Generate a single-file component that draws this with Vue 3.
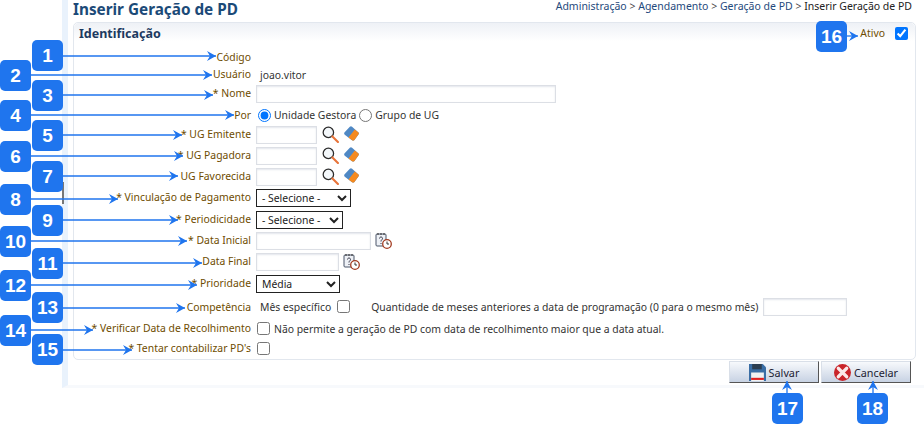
<script setup>
const rowsUg = ['UG Emitente', 'UG Pagadora', 'UG Favorecida']
const badges = [
  [1, 32, 40], [2, 0, 60], [3, 32, 80], [4, 0, 100], [5, 32, 120], [6, 0, 141],
  [7, 32, 161], [8, 0, 184], [9, 32, 205], [10, 0, 226], [11, 32, 248], [12, 0, 270],
  [13, 32, 292], [14, 0, 315], [15, 32, 334], [16, 816, 21], [17, 772, 393], [18, 857, 393]
]
const arrows = [
  [63, 56, 216, 56], [31, 75, 212, 75], [63, 95, 213, 95], [31, 115, 234, 115],
  [63, 135, 182, 135], [31, 156, 183, 156], [63, 176, 178, 176], [31, 199, 118, 199],
  [63, 220, 178, 220], [31, 241, 187, 241], [63, 263, 202, 263], [31, 285, 197, 285],
  [63, 308, 185, 308], [31, 330, 93, 330], [63, 350, 132, 350], [847, 36, 858, 36],
  [787, 393, 787, 381], [873, 393, 873, 381]
]
function head(a) {
  const [x1, y1, x2, y2] = a
  if (x1 === x2) return `${x2},${y2} ${x2 - 5},${y2 + 9} ${x2},${y2 + 6} ${x2 + 5},${y2 + 9}`
  return `${x2},${y2} ${x2 - 9},${y2 - 5} ${x2 - 6},${y2} ${x2 - 9},${y2 + 5}`
}
</script>

<template>
  <div class="page">
    <svg class="defs" width="0" height="0">
      <symbol id="i-search" viewBox="0 0 16 16">
        <circle cx="6" cy="6" r="4.900" fill="#f4f8fb" stroke="#2b2b2b" stroke-width="1.200" />
        <path d="M9.800 9.800 15 15" stroke="#e8743a" stroke-width="2" stroke-linecap="round" />
      </symbol>
      <symbol id="i-erase" viewBox="0 0 16 16">
        <path d="M6.200 .8a1.800 1.800 0 0 1 2.400 0l6.600 5.800a1.800 1.800 0 0 1 .2 2.400l-4.300 5.800a1.800 1.800 0 0 1-2.500.3L.8 9.200a1.800 1.800 0 0 1-.1-2.500Z" fill="#4f88c4" />
        <path d="M11.500 3.600l3.700 3a1.800 1.800 0 0 1 .2 2.400l-4.300 5.800a1.800 1.800 0 0 1-2.500.3L4.800 12.200Z" fill="#f58a1f" />
      </symbol>
      <symbol id="i-cal" viewBox="0 0 17 17">
        <rect x="1" y="2" width="10" height="12" rx="1" fill="#eef1f6" stroke="#4a5568" />
        <path d="M3 1v2M6 1v2M9 1v2" stroke="#333" />
        <path d="M4.500 6.500c0-2 3-2 3 0 0 1.300-1.500 1.300-1.500 3M6 11v1" fill="none" stroke="#334" />
        <circle cx="12" cy="12" r="4.300" fill="#fff" stroke="#a33b20" stroke-width="1.300" />
        <path d="M12 9.500V12h2" fill="none" stroke="#333" />
      </symbol>
      <symbol id="i-save" viewBox="0 0 16 16">
        <path d="M0 0h13l3 3v13H0Z" fill="#3a6ea5" />
        <rect x="3" y="0" width="9" height="5" fill="#2c3e50" />
        <rect x="2" y="8" width="12" height="8" fill="#f2f2f2" />
        <rect x="2" y="13" width="12" height="2" fill="#e02020" />
      </symbol>
      <symbol id="i-cancel" viewBox="0 0 16 16">
        <circle cx="8" cy="8" r="8" fill="#c9242a" />
        <path d="M4 4l8 8M12 4l-8 8" stroke="#fbe9e9" stroke-width="3" stroke-linecap="round" />
      </symbol>
    </svg>

    <div class="sidebar"></div>
    <main class="content">
      <header class="top">
        <h1>Inserir Geração de PD</h1>
        <nav class="crumbs">
          <a>Administração</a> &gt; <a>Agendamento</a> &gt; <a>Geração de PD</a> &gt; <span>Inserir Geração de PD</span>
        </nav>
      </header>

      <section class="panel">
        <div class="panel-head">
          <h2>Identificação</h2>
          <div class="active">
            <span class="lbl-active">Ativo</span>
            <input type="checkbox" checked />
          </div>
        </div>

        <div class="form">
          <div class="row h17"><label>Código</label></div>
          <div class="row h19"><label>Usuário</label><span class="value user">joao.vitor</span></div>
          <div class="row h21"><label>* Nome</label><input class="text w300" type="text" /></div>
          <div class="row h20 nudge">
            <label>Por</label>
            <span class="choices">
              <input type="radio" name="por" checked /><span>Unidade Gestora</span>
              <input type="radio" name="por" /><span>Grupo de UG</span>
            </span>
          </div>
          <div v-for="(u, i) in rowsUg" :key="u" class="row h21">
            <label>{{ i < 2 ? '* ' : '' }}{{ u }}</label>
            <input class="text w61" type="text" />
            <svg class="ico first" width="17" height="17"><use href="#i-search" /></svg>
            <svg class="ico" width="15" height="15"><use href="#i-erase" /></svg>
          </div>
          <div class="row h22">
            <label>* Vinculação de Pagamento</label>
            <select class="sel w95"><option>- Selecione -</option></select>
          </div>
          <div class="row h21">
            <label>* Periodicidade</label>
            <select class="sel w87"><option>- Selecione -</option></select>
          </div>
          <div class="row h21">
            <label>* Data Inicial</label>
            <input class="text w115" type="text" />
            <svg class="ico cal" width="17" height="17"><use href="#i-cal" /></svg>
          </div>
          <div class="row h22">
            <label>Data Final</label>
            <input class="text w83" type="text" />
            <svg class="ico cal" width="17" height="17"><use href="#i-cal" /></svg>
          </div>
          <div class="row h23">
            <label>* Prioridade</label>
            <select class="sel w84"><option>Média</option></select>
          </div>
          <div class="row h22 nudge">
            <label>Competência</label>
            <span class="value comp">Mês específico</span>
            <input type="checkbox" class="chk-comp" />
            <span class="value qty">Quantidade de meses anteriores a data de programação (0 para o mesmo mês)</span>
            <input class="text w84" type="text" />
          </div>
          <div class="row h20">
            <label>* Verificar Data de Recolhimento</label>
            <input type="checkbox" class="chk" />
            <span class="value">Não permite a geração de PD com data de recolhimento maior que a data atual.</span>
          </div>
          <div class="row h20">
            <label>* Tentar contabilizar PD's</label>
            <input type="checkbox" class="chk" />
          </div>
        </div>
      </section>

      <footer class="actions">
        <button type="button"><svg width="17" height="17"><use href="#i-save" /></svg>Salvar</button>
        <button type="button"><svg width="17" height="17"><use href="#i-cancel" /></svg>Cancelar</button>
      </footer>
    </main>

    <i class="handle"></i>
    <svg class="arrows" width="924" height="424">
      <g v-for="(a, i) in arrows" :key="i">
        <line :x1="a[0]" :y1="a[1]" :x2="a[2]" :y2="a[3]" />
        <polygon :points="head(a)" />
      </g>
    </svg>
    <b v-for="b in badges" :key="b[0]" class="badge" :style="{ left: b[1] + 'px', top: b[2] + 'px' }">{{ b[0] }}</b>
  </div>
</template>

<style scoped>
.page {
  position: relative;
  width: 924px;
  height: 424px;
  overflow: hidden;
  display: flex;
  background: #fff;
  font-family: "Noto Sans", "Liberation Sans", sans-serif;
  font-size: 10.400px;
  color: #333;
}
.defs { position: absolute; }
.sidebar { width: 62px; flex: none; }
.content {
  flex: none;
  width: 862px;
  height: 388px;
  padding: 0 8px 0 5px;
  box-sizing: border-box;
  border-left: 6px solid #e9f2fc;
  border-bottom: 3px solid #f7f9fc;
  display: flex;
  flex-direction: column;
}
.top {
  height: 22px;
  display: flex;
  justify-content: space-between;
  align-items: flex-start;
}
h1 {
  margin: 0;
  font-family: "Noto Sans", sans-serif;
  font-size: 15.300px;
  font-weight: bold;
  line-height: 18px;
  color: #1b4a78;
}
.crumbs {
  line-height: 12px;
  margin-right: 4px;
  color: #444;
  font-size: 10.500px;
}
.crumbs a { color: #1f4a7d; }
.crumbs span { color: #222; }
.panel {
  height: 338px;
  box-sizing: border-box;
  border: 1px solid #e2e7ee;
  border-radius: 5px;
  display: flex;
  flex-direction: column;
}
.panel-head {
  height: 26px;
  flex: none;
  padding: 3px 7px 0 5px;
  box-sizing: border-box;
  display: flex;
  justify-content: space-between;
  align-items: flex-start;
  background: linear-gradient(#eef1f6, #fff 70%);
  border-radius: 5px 5px 0 0;
}
h2 {
  margin: 0;
  font-family: "Noto Sans", sans-serif;
  font-size: 12.500px;
  line-height: 16px;
  font-weight: bold;
  color: #1c3a60;
}
.active { display: flex; align-items: center; gap: 10px; }
.active input { margin: 0; width: 13px; height: 13px; }
.lbl-active { color: #6e4c00; }
.form { display: flex; flex-direction: column; }
.row { display: flex; align-items: flex-start; flex: none; }
.row > label {
  width: 177px;
  flex: none;
  margin-right: 5px;
  text-align: right;
  color: #6e4c00;
  line-height: 17px;
  white-space: nowrap;
}
.nudge > label { padding-top: 1px; }
.h17 { height: 17px; }
.h19 { height: 19px; }
.h20 { height: 20px; }
.h21 { height: 21px; }
.h22 { height: 22px; }
.h23 { height: 23px; }
.value { line-height: 18px; white-space: nowrap; }
.user { margin-left: 4px; }
.comp { margin-left: 4px; }
.text {
  height: 18px;
  box-sizing: border-box;
  border: 1px solid #dcdfe5;
  box-shadow: inset 0 1px 2px #e3e6ec;
  padding: 0 2px;
  margin: 0;
  background: #fff;
  font: inherit;
}
.w300 { width: 300px; }
.w61 { width: 61px; }
.w115 { width: 115px; }
.w83 { width: 83px; }
.w84 { width: 84px; }
.choices { display: flex; align-items: center; height: 18px; line-height: 18px; }
.choices input { margin: 1px 3px 0 2px; width: 13px; height: 13px; }
.choices span { margin-right: 1px; }
.ico { flex: none; }
.ico.first { margin: 0 5px 0 5px; }
.ico.cal { margin: 0 0 0 4px; }
.sel {
  height: 18px;
  box-sizing: border-box;
  margin: 0;
  font: inherit;
  color: #222;
  background: #fff;
  border: 1px solid #222;
  border-radius: 0;
  padding: 0 1px;
}
.w95 { width: 95px; }
.w87 { width: 87px; }
.w84.sel { width: 84px; }
.chk { width: 13px; height: 13px; margin: 2px 4px 0 1px; }
.chk-comp { width: 13px; height: 13px; margin: 2px 21px 0 6px; }
.value.qty { margin-right: 5px; }
.actions {
  display: flex;
  justify-content: flex-end;
  gap: 2px;
  padding: 1px 5px 0 0;
}
.actions button {
  width: 90px;
  height: 22px;
  box-sizing: border-box;
  padding: 0;
  border: 1px solid #d9dfe8;
  border-right-color: #555;
  border-bottom-color: #555;
  background: linear-gradient(#f7f9fc, #c7d2e3);
  font: inherit;
  font-size: 10.800px;
  color: #223;
  display: flex;
  align-items: center;
  justify-content: center;
  gap: 3px;
}
.handle {
  position: absolute;
  left: 62px;
  top: 182px;
  width: 2px;
  height: 22px;
  background: #777;
}
.arrows { position: absolute; left: 0; top: 0; pointer-events: none; }
.arrows line { stroke: #1f75ee; stroke-width: 1.300; }
.arrows polygon { fill: #1f75ee; }
.badge {
  position: absolute;
  width: 31px;
  height: 31px;
  border-radius: 5px;
  background: #1f75ee;
  color: #fff;
  font-family: "Liberation Sans", sans-serif;
  font-size: 19px;
  font-weight: bold;
  font-style: normal;
  line-height: 31px;
  text-align: center;
}
</style>
